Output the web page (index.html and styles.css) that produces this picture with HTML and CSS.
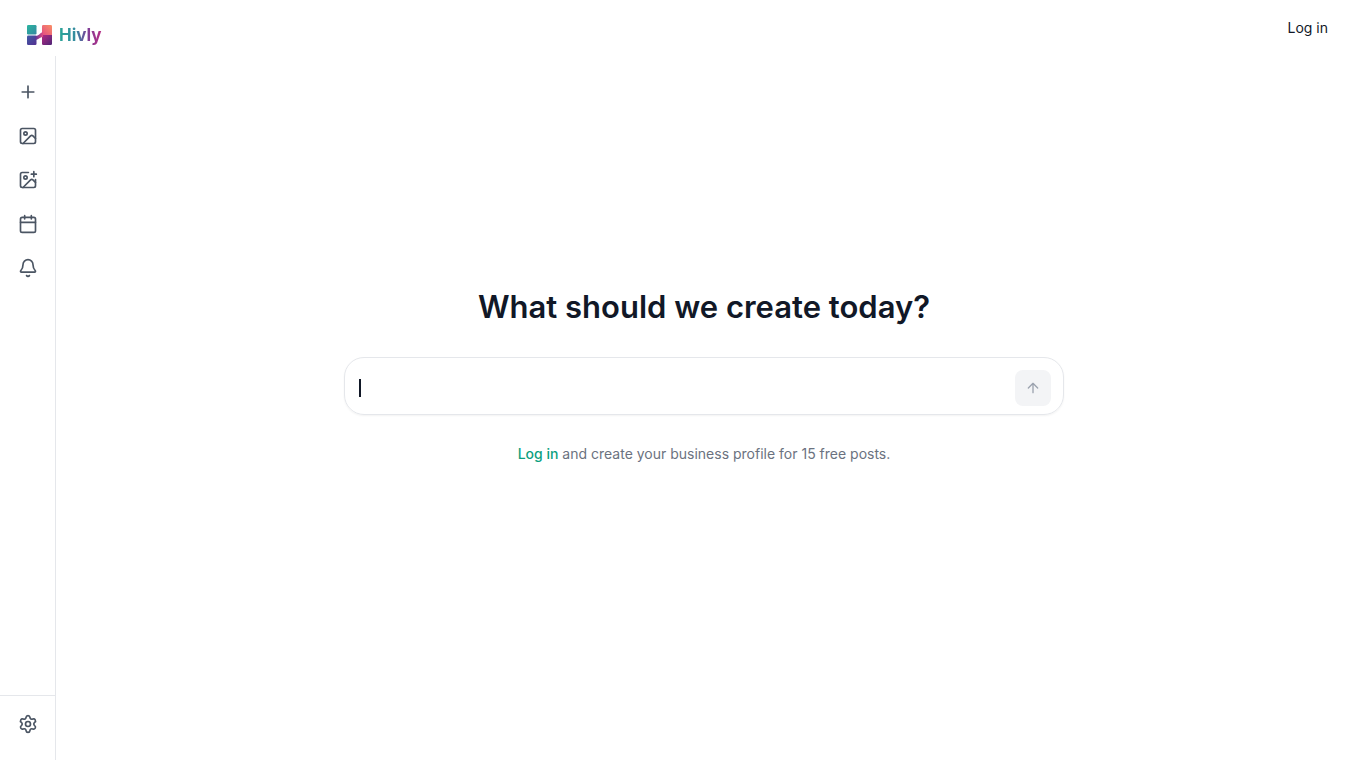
FILE: index.html
```html
<!DOCTYPE html>
<html lang="en">
<head>
<meta charset="utf-8">
<meta name="viewport" content="width=device-width, initial-scale=1">
<title>Hivly</title>
<link rel="stylesheet" href="styles.css">
</head>
<body>
<header class="topbar">
  <a class="brand" href="#">
    <svg class="brand-mark" viewBox="0 0 26 22" aria-hidden="true">
      <defs>
        <linearGradient id="teal" x1="0" y1="0" x2="1" y2="1"><stop offset="0" stop-color="#2bb5a0"/><stop offset="1" stop-color="#3488a0"/></linearGradient>
        <linearGradient id="indigo" x1="0" y1="0" x2="1" y2="1"><stop offset="0" stop-color="#405ba5"/><stop offset="1" stop-color="#542f91"/></linearGradient>
        <linearGradient id="coral" x1="1" y1="0" x2="0" y2="1"><stop offset="0" stop-color="#fa8f65"/><stop offset="1" stop-color="#e24c83"/></linearGradient>
        <linearGradient id="plum" x1="0" y1="0" x2="1" y2="1"><stop offset="0" stop-color="#b32982"/><stop offset="1" stop-color="#4d2577"/></linearGradient>
        <linearGradient id="bridge" x1="0" y1="0" x2="1" y2="0"><stop offset="0" stop-color="#603497"/><stop offset="1" stop-color="#e24c83"/></linearGradient>
      </defs>
      <rect x="1" y="1" width="9.500" height="9.500" rx="1.2" fill="url(#teal)"/>
      <rect x="1" y="11.500" width="9.500" height="9.500" rx="1.2" fill="url(#indigo)"/>
      <path d="M17.2 1h7.6Q26 1 26 2.200V11H16V2.200Q16 1 17.200 1Z" fill="url(#coral)"/>
      <path d="M16 11h10v8.800Q26 21 24.800 21h-7.600Q16 21 16 19.800Z" fill="url(#plum)"/>
      <path d="M9.500 12c3.500 0 4-3 7.500-4v5c-3 0-4 2.500-7.500 3Z" fill="url(#bridge)"/>
    </svg>
    <span class="brand-name">Hivly</span>
  </a>
  <a class="login" href="#">Log in</a>
</header>
<div class="shell">
  <nav class="sidebar" aria-label="Main">
    <div class="nav-group">
      <button class="nav-button" type="button" aria-label="New"><svg class="icon" viewBox="0 0 24 24"><path d="M5 12h14M12 5v14"/></svg></button>
      <button class="nav-button" type="button" aria-label="Images"><svg class="icon" viewBox="0 0 24 24"><rect x="3" y="3" width="18" height="18" rx="2"/><circle cx="9" cy="9" r="2"/><path d="m21 15-3.086-3.086a2 2 0 0 0-2.828 0L6 21"/></svg></button>
      <button class="nav-button" type="button" aria-label="Create image"><svg class="icon" viewBox="0 0 24 24"><path d="M16 5h6M19 2v6M21 11.500V19a2 2 0 0 1-2 2H5a2 2 0 0 1-2-2V5a2 2 0 0 1 2-2h7.500"/><path d="m21 15-3.086-3.086a2 2 0 0 0-2.828 0L6 21"/><circle cx="9" cy="9" r="2"/></svg></button>
      <button class="nav-button" type="button" aria-label="Calendar"><svg class="icon" viewBox="0 0 24 24"><path d="M8 2v4M16 2v4M3 10h18"/><rect x="3" y="4" width="18" height="18" rx="2"/></svg></button>
      <button class="nav-button" type="button" aria-label="Notifications"><svg class="icon" viewBox="0 0 24 24"><path d="M10.268 21a2 2 0 0 0 3.464 0"/><path d="M3.262 15.326A1 1 0 0 0 4 17h16a1 1 0 0 0 .74-1.673C19.410 13.956 18 12.499 18 8A6 6 0 0 0 6 8c0 4.499-1.411 5.956-2.738 7.326"/></svg></button>
    </div>
    <div class="nav-footer">
      <button class="nav-button" type="button" aria-label="Settings"><svg class="icon" viewBox="0 0 24 24"><path d="M9.671 4.136a2.340 2.340 0 0 1 4.659 0 2.340 2.340 0 0 0 3.319 1.915 2.340 2.340 0 0 1 2.330 4.033 2.340 2.340 0 0 0 0 3.831 2.340 2.340 0 0 1-2.330 4.033 2.340 2.340 0 0 0-3.319 1.915 2.340 2.340 0 0 1-4.659 0 2.340 2.340 0 0 0-3.320-1.915 2.340 2.340 0 0 1-2.330-4.033 2.340 2.340 0 0 0 0-3.831A2.340 2.340 0 0 1 6.350 6.051a2.340 2.340 0 0 0 3.319-1.915"/><circle cx="12" cy="12" r="3"/></svg></button>
    </div>
  </nav>
  <main class="main">
    <h1 class="title">What should we create today?</h1>
    <form class="composer">
      <div class="field">
        <input class="prompt" type="text" aria-label="What should we create today?">
        <span class="caret" aria-hidden="true"></span>
      </div>
      <button class="send" type="button" aria-label="Send"><svg class="send-icon" viewBox="0 0 24 24"><path d="m5 12 7-7 7 7M12 19V5"/></svg></button>
    </form>
    <p class="hint"><a class="hint-link" href="#">Log in</a> and create your business profile for 15 free posts.</p>
  </main>
</div>
</body>
</html>
```
FILE: styles.css
```css
* { box-sizing: border-box; }
body {
  margin: 0;
  min-height: 100vh;
  display: flex;
  flex-direction: column;
  background: #fff;
  color: #111827;
  font-family: Inter, "Liberation Sans", sans-serif;
  font-size: 14px;
  line-height: 20px;
}
a { color: inherit; text-decoration: none; }
button { padding: 0; border: 0; background: none; cursor: pointer; }
.topbar {
  height: 56px;
  padding: 0 24px;
  display: flex;
  align-items: center;
  justify-content: space-between;
}
.brand {
  display: flex;
  align-items: center;
  gap: 7px;
  padding: 13px 2px 0;
}
.brand-mark { width: 26px; height: 22px; }
.brand-name {
  font-size: 17px;
  line-height: 24px;
  font-weight: 700;
  color: transparent;
  background: linear-gradient(90deg, #2ba597 0%, #358aa0 40%, #7a3f98 65%, #b82c84 100%);
  background-clip: text;
  -webkit-background-clip: text;
}
.shell { flex: 1; display: flex; }
.sidebar {
  width: 56px;
  flex: none;
  display: flex;
  flex-direction: column;
  justify-content: space-between;
  border-right: 1px solid #e5e7eb;
}
.nav-group {
  display: flex;
  flex-direction: column;
  align-items: center;
  gap: 4px;
  padding: 16px 0;
}
.nav-footer {
  display: flex;
  justify-content: center;
  padding: 8px 0 16px;
  border-top: 1px solid #e5e7eb;
}
.nav-button {
  width: 40px;
  height: 40px;
  display: grid;
  place-items: center;
  color: #4b5563;
}
.icon, .send-icon {
  fill: none;
  stroke: currentColor;
  stroke-width: 2;
  stroke-linecap: round;
  stroke-linejoin: round;
}
.icon { width: 20px; height: 20px; }
.send-icon { width: 16px; height: 16px; }
.main {
  flex: 1;
  display: flex;
  flex-direction: column;
  align-items: center;
  justify-content: center;
  padding: 0 24px 64px;
}
.title {
  margin: 0 0 32px;
  font-size: 31px;
  line-height: 36px;
  font-weight: 600;
}
.composer {
  width: 100%;
  max-width: 720px;
  display: flex;
  align-items: center;
  gap: 12px;
  padding: 12px 12px 8px;
  border: 1px solid #e5e7eb;
  border-radius: 20px;
  box-shadow: 0 1px 2px rgb(0 0 0 / 5%);
}
.field { position: relative; flex: 1; display: flex; }
.prompt {
  width: 100%;
  height: 36px;
  padding: 0 4px;
  border: 0;
  outline: 0;
  background: none;
  color: inherit;
  font: inherit;
}
.caret {
  position: absolute;
  left: 2px;
  top: 9px;
  width: 2px;
  height: 18px;
  background: #111827;
}
.send {
  width: 36px;
  height: 36px;
  display: grid;
  place-items: center;
  border-radius: 8px;
  background: #f3f4f6;
  color: #9ca3af;
}
.hint { margin: 29px 0 0; color: #6b7280; }
.hint-link { color: #0d9f80; font-weight: 500; }
```
